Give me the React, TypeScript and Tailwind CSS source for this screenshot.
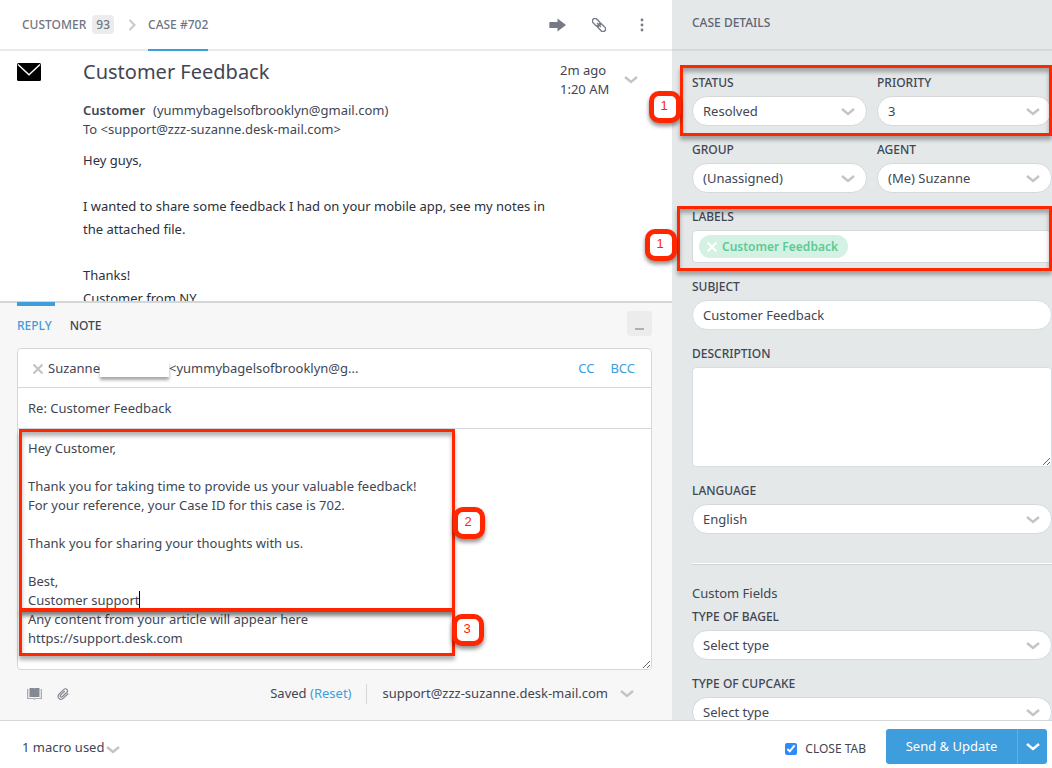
import type { ReactNode } from "react";
import { clsx } from "clsx";

const MESSAGE_LINES = [
  "Hey guys,",
  "",
  "I wanted to share some feedback I had on your mobile app, see my notes in the attached file.",
  "",
  "Thanks!",
  "Customer from NY",
];

const REPLY_BODY = `Hey Customer,

Thank you for taking time to provide us your valuable feedback!
For your reference, your Case ID for this case is 702.

Thank you for sharing your thoughts with us.

Best,
Customer support
Any content from your article will appear here
https://support.desk.com`;

const Chevron = ({ className }: { className?: string }) => (
  <svg viewBox="0 0 14 8" className={clsx("h-2 w-3.5", className)} fill="none" stroke="currentColor" strokeWidth="2.4" aria-hidden="true">
    <path d="M1 1l6 5L13 1" />
  </svg>
);

const Cross = ({ className }: { className?: string }) => (
  <svg viewBox="0 0 10 10" className={clsx("h-2.5 w-2.5", className)} fill="none" stroke="currentColor" strokeWidth="2.2" aria-hidden="true">
    <path d="M.5.5l9 9M9.5.5l-9 9" />
  </svg>
);

const Field = ({ id, label, children }: { id: string; label: string; children: ReactNode }) => (
  <div className="flex min-w-0 flex-col gap-[3px]">
    <label htmlFor={id} className="text-xs leading-5 font-medium uppercase">
      {label}
    </label>
    {children}
  </div>
);

const SelectField = ({ id, label, options }: { id: string; label: string; options: string[] }) => (
  <Field id={id} label={label}>
    <div className="relative">
      <select id={id} className="h-[30px] w-full appearance-none rounded-full border border-[#d5d9dc] bg-white pt-0.5 pr-9 pl-2.5 text-[13px]">
        {options.map((option) => (
          <option key={option}>{option}</option>
        ))}
      </select>
      <Chevron className="pointer-events-none absolute top-3 right-3 text-[#c4c4c4]" />
    </div>
  </Field>
);

const Callout = ({ step, className, badgeClassName }: { step: number; className: string; badgeClassName: string }) => (
  <div
    className={clsx(
      "pointer-events-none absolute border-3 border-[#ff2600] shadow-[0_4px_4px_rgba(0,0,0,0.3),inset_0_4px_4px_rgba(0,0,0,0.3)]",
      className,
    )}
  >
    <span
      className={clsx(
        "absolute flex h-8 w-8 items-center justify-center rounded-[10px] border-5 border-[#ff2600] bg-white pr-0.5 pb-0.5 font-['Liberation_Sans',sans-serif] text-[13px] text-[#ff2600] shadow-[0_3px_4px_rgba(0,0,0,0.45)]",
        badgeClassName,
      )}
    >
      {step}
    </span>
  </div>
);

const CaseHeader = () => (
  <header className="flex h-[51px] shrink-0 items-stretch border-b-2 border-[#ebebeb] pl-[22px] pr-5 text-xs font-medium text-[#6f7681]">
    <a href="#customer" className="flex items-center gap-1.5">
      CUSTOMER
      <span className="rounded bg-[#ececec] px-1 leading-[19px]">93</span>
    </a>
    <svg viewBox="0 0 8 12" className="mr-3 ml-3.5 h-3 w-2 self-center" fill="none" stroke="#c8c8c8" strokeWidth="2" aria-hidden="true">
      <path d="M1.5 1l5 5-5 5" />
    </svg>
    <a href="#case" className="-mb-0.5 flex items-center border-b-2 border-[#3d9ddd]">
      CASE #702
    </a>
    <div className="ml-auto flex items-center gap-[26px] text-[#757a85]">
      <button type="button" aria-label="Forward">
        <svg viewBox="0 0 17 14" className="h-3.5 w-[17px]" fill="currentColor">
          <path d="M1 4h7.5V.6L17 7l-8.5 6.4V10H1a.7.7 0 0 1-.7-.7V4.700A.7.7 0 0 1 1 4z" />
        </svg>
      </button>
      <button type="button" aria-label="Copy link">
        <svg viewBox="0 0 14 14" className="h-3.5 w-3.5" fill="none" stroke="currentColor" strokeWidth="1.4">
          <g transform="rotate(45 7 7)">
            <rect x="-1.200" y="4.400" width="9" height="5.200" rx="2.600" />
            <rect x="6.200" y="4.400" width="9" height="5.200" rx="2.600" />
            <path d="M4 7h6" strokeWidth="1" />
          </g>
        </svg>
      </button>
      <button type="button" aria-label="More actions">
        <svg viewBox="0 0 20 14" className="h-3.5 w-5" fill="currentColor">
          <circle cx="10" cy="2" r="1.400" />
          <circle cx="10" cy="7" r="1.400" />
          <circle cx="10" cy="12" r="1.400" />
        </svg>
      </button>
    </div>
  </header>
);

const Message = () => (
  <article className="flex min-h-0 flex-1 items-start overflow-hidden pl-[17px] pr-[34px] pt-[7px]">
    <svg viewBox="0 0 24 18" className="mt-[5px] h-[18px] w-6 shrink-0" aria-hidden="true">
      <rect width="24" height="18" rx="1.500" />
      <path d="M1 1.500l11 10.300L23 1.500" fill="none" stroke="#fff" strokeWidth="1.400" />
    </svg>
    <div className="ml-[42px] min-w-0 max-w-[477px] flex-1">
      <h1 className="text-xl leading-7">Customer Feedback</h1>
      <p className="mt-[15px] leading-[19px]">
        <strong className="mr-2 font-semibold">Customer</strong>
        (yummybagelsofbrooklyn@gmail.com)
      </p>
      <p className="leading-[19px]">To &lt;support@zzz-suzanne.desk-mail.com&gt;</p>
      <div className="mt-2.5 pr-2 leading-[23px] text-[#2b303a]">
        {MESSAGE_LINES.map((line, i) => (
          <p key={i} className="min-h-[23px]">
            {line}
          </p>
        ))}
      </div>
    </div>
    <time className="ml-auto mt-[3px] w-16 leading-[19px]">
      2m ago
      <br />
      1:20 AM
    </time>
    <button type="button" aria-label="Message options" className="mt-[18px] flex">
      <Chevron className="text-[#c4c4c4]" />
    </button>
  </article>
);

const ReplyEditor = () => (
  <section className="shrink-0 border-t-2 border-[#d3d7da] bg-[#f7f7f7] pl-[17px] pr-5">
    <div className="flex h-[45px] items-start text-xs font-medium">
      <button type="button" className="-mt-px h-[39px] border-t-4 border-[#3d9ddd] pr-[3px] pt-1 text-[#3d9ddd]">
        REPLY
      </button>
      <button type="button" className="-mt-px ml-[15px] h-[39px] pt-2">
        NOTE
      </button>
      <button type="button" aria-label="Minimize" className="ml-auto mt-2 flex h-[25px] w-[25px] justify-center rounded bg-[#ececec]">
        <span className="mt-[17px] h-0.5 w-[9px] bg-[#b0b0b0]" />
      </button>
    </div>

    <div className="relative rounded border border-[#d5d8da] bg-white">
      <div className="flex h-[39px] items-center border-b border-[#d5d8da] pt-0.5 pl-[15px] pr-4">
        <button type="button" aria-label="Remove recipient" className="mr-[5px] flex">
          <Cross className="text-[#c4c4c4]" />
        </button>
        <span>Suzanne</span>
        <span className="h-4 w-[69px] bg-white shadow-[0_3px_3px_rgba(0,0,0,0.35)]" />
        <span>&lt;yummybagelsofbrooklyn@g...</span>
        <div className="ml-auto flex gap-4 text-[#3d9ddd]">
          <button type="button">CC</button>
          <button type="button">BCC</button>
        </div>
      </div>
      <input
        aria-label="Reply subject"
        defaultValue="Re: Customer Feedback"
        className="block h-[41px] w-full border-b border-[#d5d8da] px-2.5"
      />
      <textarea
        aria-label="Reply message"
        defaultValue={REPLY_BODY}
        className="block h-60 w-full resize-y overflow-hidden px-2.5 pt-2.5 leading-[19px]"
      />
      <span className="absolute top-[242px] left-[121px] h-[18px] w-px bg-black" />
      <Callout step={2} className="top-20 left-px h-[182px] w-[436px]" badgeClassName="top-[75px] -right-[33px]" />
      <Callout step={3} className="top-[260px] left-px h-[47px] w-[436px]" badgeClassName="top-0.5 -right-8" />
    </div>

    <div className="flex h-[50px] items-center pb-0.5 pl-2.5 pr-[18px]">
      <button type="button" aria-label="Knowledge base">
        <svg viewBox="0 0 15 12" className="h-3 w-[15px]" fill="#858991">
          <path d="M2.500 0h4.300l.7.500.7-.5h4.300v9H8.300l-.8.600-.8-.6H2.500z" />
          <path d="M0 1h1.300v9h5.100l1.100.8 1.100-.8h5.100V1H15v10H9l-1.500 1L6 11H0z" fill="#a9acb2" />
        </svg>
      </button>
      <button type="button" aria-label="Attach file" className="ml-[15px]">
        <svg viewBox="0 0 12 12" className="h-3 w-3" fill="none" stroke="#858991" strokeWidth="1.2">
          <path d="M11.300 5.500L6.200 10.400a2.900 2.900 0 0 1-4.500-.3 2.900 2.900 0 0 1 .3-3.800l4.900-4.900a2 2 0 0 1 3 .1 2 2 0 0 1 0 2.800L5.300 8.700a1.100 1.100 0 0 1-1.700-1.500L7.800 3" />
        </svg>
      </button>
      <span className="ml-auto">
        Saved{" "}
        <a href="#reset" className="text-[#3d9ddd]">
          (Reset)
        </a>
      </span>
      <span className="mx-[15px] h-5 w-px bg-[#d5d8da]" />
      <button type="button" className="flex items-center gap-3">
        support@zzz-suzanne.desk-mail.com
        <Chevron className="text-[#c4c4c4]" />
      </button>
    </div>
  </section>
);

const CaseDetails = () => (
  <aside className="relative flex w-[380px] shrink-0 flex-col bg-[#e4e8e9]">
    <h2 className="flex h-[51px] shrink-0 items-center border-b-2 border-[#d5d8da] pb-1 pl-5 text-xs font-medium text-[#5f6571]">
      CASE DETAILS
    </h2>
    <form className="flex flex-col gap-3.5 bg-[#e4e8e9] pt-[22px] pl-5">
      <div className="relative grid grid-cols-2 gap-2.5">
        <SelectField id="status" label="Status" options={["Resolved", "Open", "Pending"]} />
        <SelectField id="priority" label="Priority" options={["3", "1", "2"]} />
        <Callout step={1} className="-top-2 right-0 -bottom-2.5 -left-3" badgeClassName="top-[23px] -left-[34px]" />
      </div>
      <div className="grid grid-cols-2 gap-2.5">
        <SelectField id="group" label="Group" options={["(Unassigned)"]} />
        <SelectField id="agent" label="Agent" options={["(Me) Suzanne"]} />
      </div>
      <div className="relative">
        <Field id="labels" label="Labels">
          <div className="flex h-[33px] items-center rounded border border-[#d5d9dc] bg-white pl-1.5">
            <span className="flex h-[23px] items-center rounded-full bg-[#d3f2e4] pr-2.5 pl-2 text-xs font-semibold text-[#5ec995]">
              <button type="button" aria-label="Remove label" className="mr-[5px]">
                <Cross className="text-white" />
              </button>
              Customer Feedback
            </span>
            <input id="labels" className="min-w-0 flex-1 px-2" />
          </div>
        </Field>
        <Callout step={1} className="-top-px right-0 -bottom-2 -left-[15px]" badgeClassName="top-5 -left-[35px]" />
      </div>
      <Field id="subject" label="Subject">
        <input id="subject" defaultValue="Customer Feedback" className="h-[30px] rounded-full border border-[#d9dddf] bg-white px-2.5" />
      </Field>
      <Field id="description" label="Description">
        <textarea id="description" className="block h-[100px] w-full rounded border border-[#d9dddf] bg-white px-2.5" />
      </Field>
      <SelectField id="language" label="Language" options={["English"]} />
      <hr className="mt-[15px] h-0.5 border-t border-b border-t-white border-b-[#d0d4d7]" />
      <h3 className="mt-[5px] -mb-[9px] leading-[18px]">Custom Fields</h3>
      <SelectField id="bagel" label="Type of bagel" options={["Select type"]} />
      <SelectField id="cupcake" label="Type of cupcake" options={["Select type"]} />
    </form>
  </aside>
);

const ActionBar = () => (
  <footer className="relative z-10 flex h-12 shrink-0 items-center border-t border-[#d3d7da] bg-white pl-[22px] pr-[5px]">
    <button type="button" className="flex items-center gap-0.5 pt-1.5">
      1 macro used
      <Chevron className="mt-1 text-[#c4c4c4]" />
    </button>
    <label className="mr-5 ml-auto flex items-center gap-2 pt-2 text-xs">
      <input type="checkbox" defaultChecked className="h-3 w-3 accent-[#2f8bf7]" />
      CLOSE TAB
    </label>
    <div className="mt-1 flex h-[35px] overflow-hidden rounded-[3px] bg-[#3d9ddd] text-white">
      <button type="button" className="w-[131px]">
        Send &amp; Update
      </button>
      <button type="button" aria-label="More send options" className="flex w-[30px] items-center justify-center border-l border-[#5eb0e6]">
        <Chevron className="h-1.5 w-2.5" />
      </button>
    </div>
  </footer>
);

const App = () => {
  return (
    <div className="flex h-screen flex-col overflow-hidden bg-white font-['Noto_Sans',sans-serif] text-[13px] text-[#414653]">
      <div className="flex min-h-0 flex-1">
        <main className="flex min-w-0 flex-1 flex-col">
          <CaseHeader />
          <Message />
          <ReplyEditor />
        </main>
        <CaseDetails />
      </div>
      <ActionBar />
    </div>
  );
};

export default App;
